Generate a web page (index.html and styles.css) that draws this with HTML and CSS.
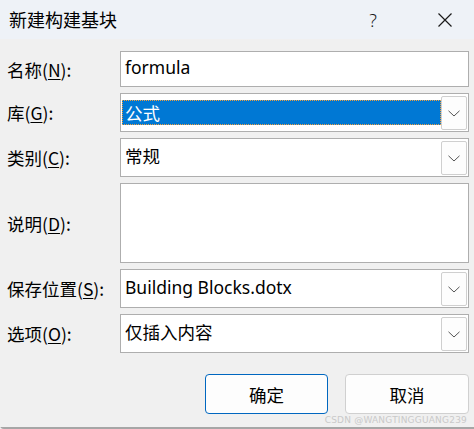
FILE: index.html
```html
<!DOCTYPE html>
<html lang="zh-CN">
<head>
<meta charset="utf-8">
<title>新建构建基块</title>
<link rel="stylesheet" href="styles.css">
</head>
<body>
<div class="window">
  <div class="titlebar">
    <span class="title">新建构建基块</span>
    <span class="help">?</span>
    <span class="close">
      <svg width="16" height="16" viewBox="0 0 16 16"><path d="M1.5 1.5 L14.5 14.5 M14.5 1.5 L1.5 14.5" stroke="#1a1a1a" stroke-width="1.2" fill="none"/></svg>
    </span>
  </div>
  <div class="content">
    <div class="form">
      <label class="lbl">名称(<u>N</u>):</label>
      <div class="field h36"><span class="val">formula</span></div>

      <label class="lbl">库(<u>G</u>):</label>
      <div class="field combo">
        <span class="sel">公式</span>
        <span class="dd"><svg width="12" height="7" viewBox="0 0 12 7"><path d="M0.5 0.8 L6 6 L11.5 0.8" stroke="#555" stroke-width="1" fill="none"/></svg></span>
      </div>

      <label class="lbl">类别(<u>C</u>):</label>
      <div class="field combo">
        <span class="val">常规</span>
        <span class="dd"><svg width="12" height="7" viewBox="0 0 12 7"><path d="M0.5 0.8 L6 6 L11.5 0.8" stroke="#555" stroke-width="1" fill="none"/></svg></span>
      </div>

      <label class="lbl">说明(<u>D</u>):</label>
      <div class="field area"></div>

      <label class="lbl">保存位置(<u>S</u>):</label>
      <div class="field combo">
        <span class="val">Building Blocks.dotx</span>
        <span class="dd"><svg width="12" height="7" viewBox="0 0 12 7"><path d="M0.5 0.8 L6 6 L11.5 0.8" stroke="#555" stroke-width="1" fill="none"/></svg></span>
      </div>

      <label class="lbl">选项(<u>O</u>):</label>
      <div class="field combo">
        <span class="val">仅插入内容</span>
        <span class="dd"><svg width="12" height="7" viewBox="0 0 12 7"><path d="M0.5 0.8 L6 6 L11.5 0.8" stroke="#555" stroke-width="1" fill="none"/></svg></span>
      </div>
    </div>
    <div class="buttons">
      <button class="btn primary">确定</button>
      <button class="btn">取消</button>
    </div>
    <div class="watermark">CSDN @WANGTINGGUANG239</div>
  </div>
</div>
</body>
</html>
```
FILE: styles.css
```css
html, body {
  margin: 0;
  padding: 0;
  background: #f0f0f0;
}
body {
  width: 474px;
  height: 429px;
  overflow: hidden;
  font-family: "Noto Sans", "Noto Sans CJK SC", sans-serif;
  color: #000;
}
.window {
  width: 474px;
  height: 429px;
  box-sizing: border-box;
  border-bottom: 2px solid #a6a6a6;
  border-bottom-left-radius: 4px;
  display: flex;
  flex-direction: column;
}
.titlebar {
  height: 39px;
  background: #eef2f7;
  display: flex;
  align-items: center;
  padding-left: 9px;
  flex: none;
}
.title {
  font-family: "Noto Sans CJK SC", sans-serif;
  font-size: 18px;
  flex: 1;
  line-height: 1;
  margin-top: -2px;
}
.help {
  font-family: "Noto Sans", sans-serif;
  font-size: 18px;
  font-weight: 300;
  margin-right: 60px;
  color: #1a1a1a;
}
.close {
  display: flex;
  margin-right: 21px;
  margin-top: 1px;
}
.content {
  flex: 1;
  position: relative;
  background: #f0f0f0;
}
.form {
  display: grid;
  grid-template-columns: 120px 349px;
  grid-template-rows: 36px 39px 39px 80px 39px 39px;
  row-gap: 6px;
  margin-top: 12px;
}
.lbl {
  font-family: "Noto Sans CJK SC", sans-serif;
  font-size: 17.5px;
  padding-left: 7px;
  display: flex;
  align-items: center;
  white-space: nowrap;
}
.lbl u {
  text-underline-offset: 2px;
}
.field {
  box-sizing: border-box;
  background: #fff;
  border: 1px solid #aeaeae;
  display: flex;
  align-items: center;
  position: relative;
}
.val {
  font-family: "Noto Sans", "Noto Sans CJK SC", sans-serif;
  font-size: 17.5px;
  padding-left: 4px;
  line-height: 1;
  margin-top: -2px;
}
.sel {
  font-family: "Noto Sans CJK SC", sans-serif;
  font-size: 17.5px;
  color: #fff;
  background: #0078d4;
  outline: 1px dotted #f0a040;
  outline-offset: -1px;
  margin-left: 1px;
  height: 25px;
  flex: 1;
  display: flex;
  align-items: center;
  padding-left: 3px;
  margin-right: 0;
}
.combo .val { flex: 1; }
.dd {
  width: 26px;
  height: 34px;
  box-sizing: border-box;
  border: 1px solid #cfcfcf;
  border-radius: 2px;
  background: #fdfdfd;
  display: flex;
  align-items: center;
  justify-content: center;
  margin-right: 1px;
  flex: none;
}
.dd svg { margin-top: 1px; }
.buttons {
  display: flex;
  justify-content: flex-end;
  gap: 17px;
  margin-top: 21px;
  padding-right: 5px;
}
.btn {
  width: 124px;
  height: 40px;
  box-sizing: border-box;
  border: 1px solid #d0d0d0;
  border-radius: 4px;
  background: #fdfdfd;
  font-family: "Noto Sans CJK SC", sans-serif;
  font-size: 17.5px;
  color: #000;
  padding: 0;
}
.btn.primary {
  width: 123px;
  border: 1px solid #0067c0;
}
.watermark {
  position: absolute;
  right: 7px;
  bottom: 2px;
  font-family: "DejaVu Sans", sans-serif;
  font-size: 9px;
  color: #c9c9c9;
  letter-spacing: 0.2px;
}
```
